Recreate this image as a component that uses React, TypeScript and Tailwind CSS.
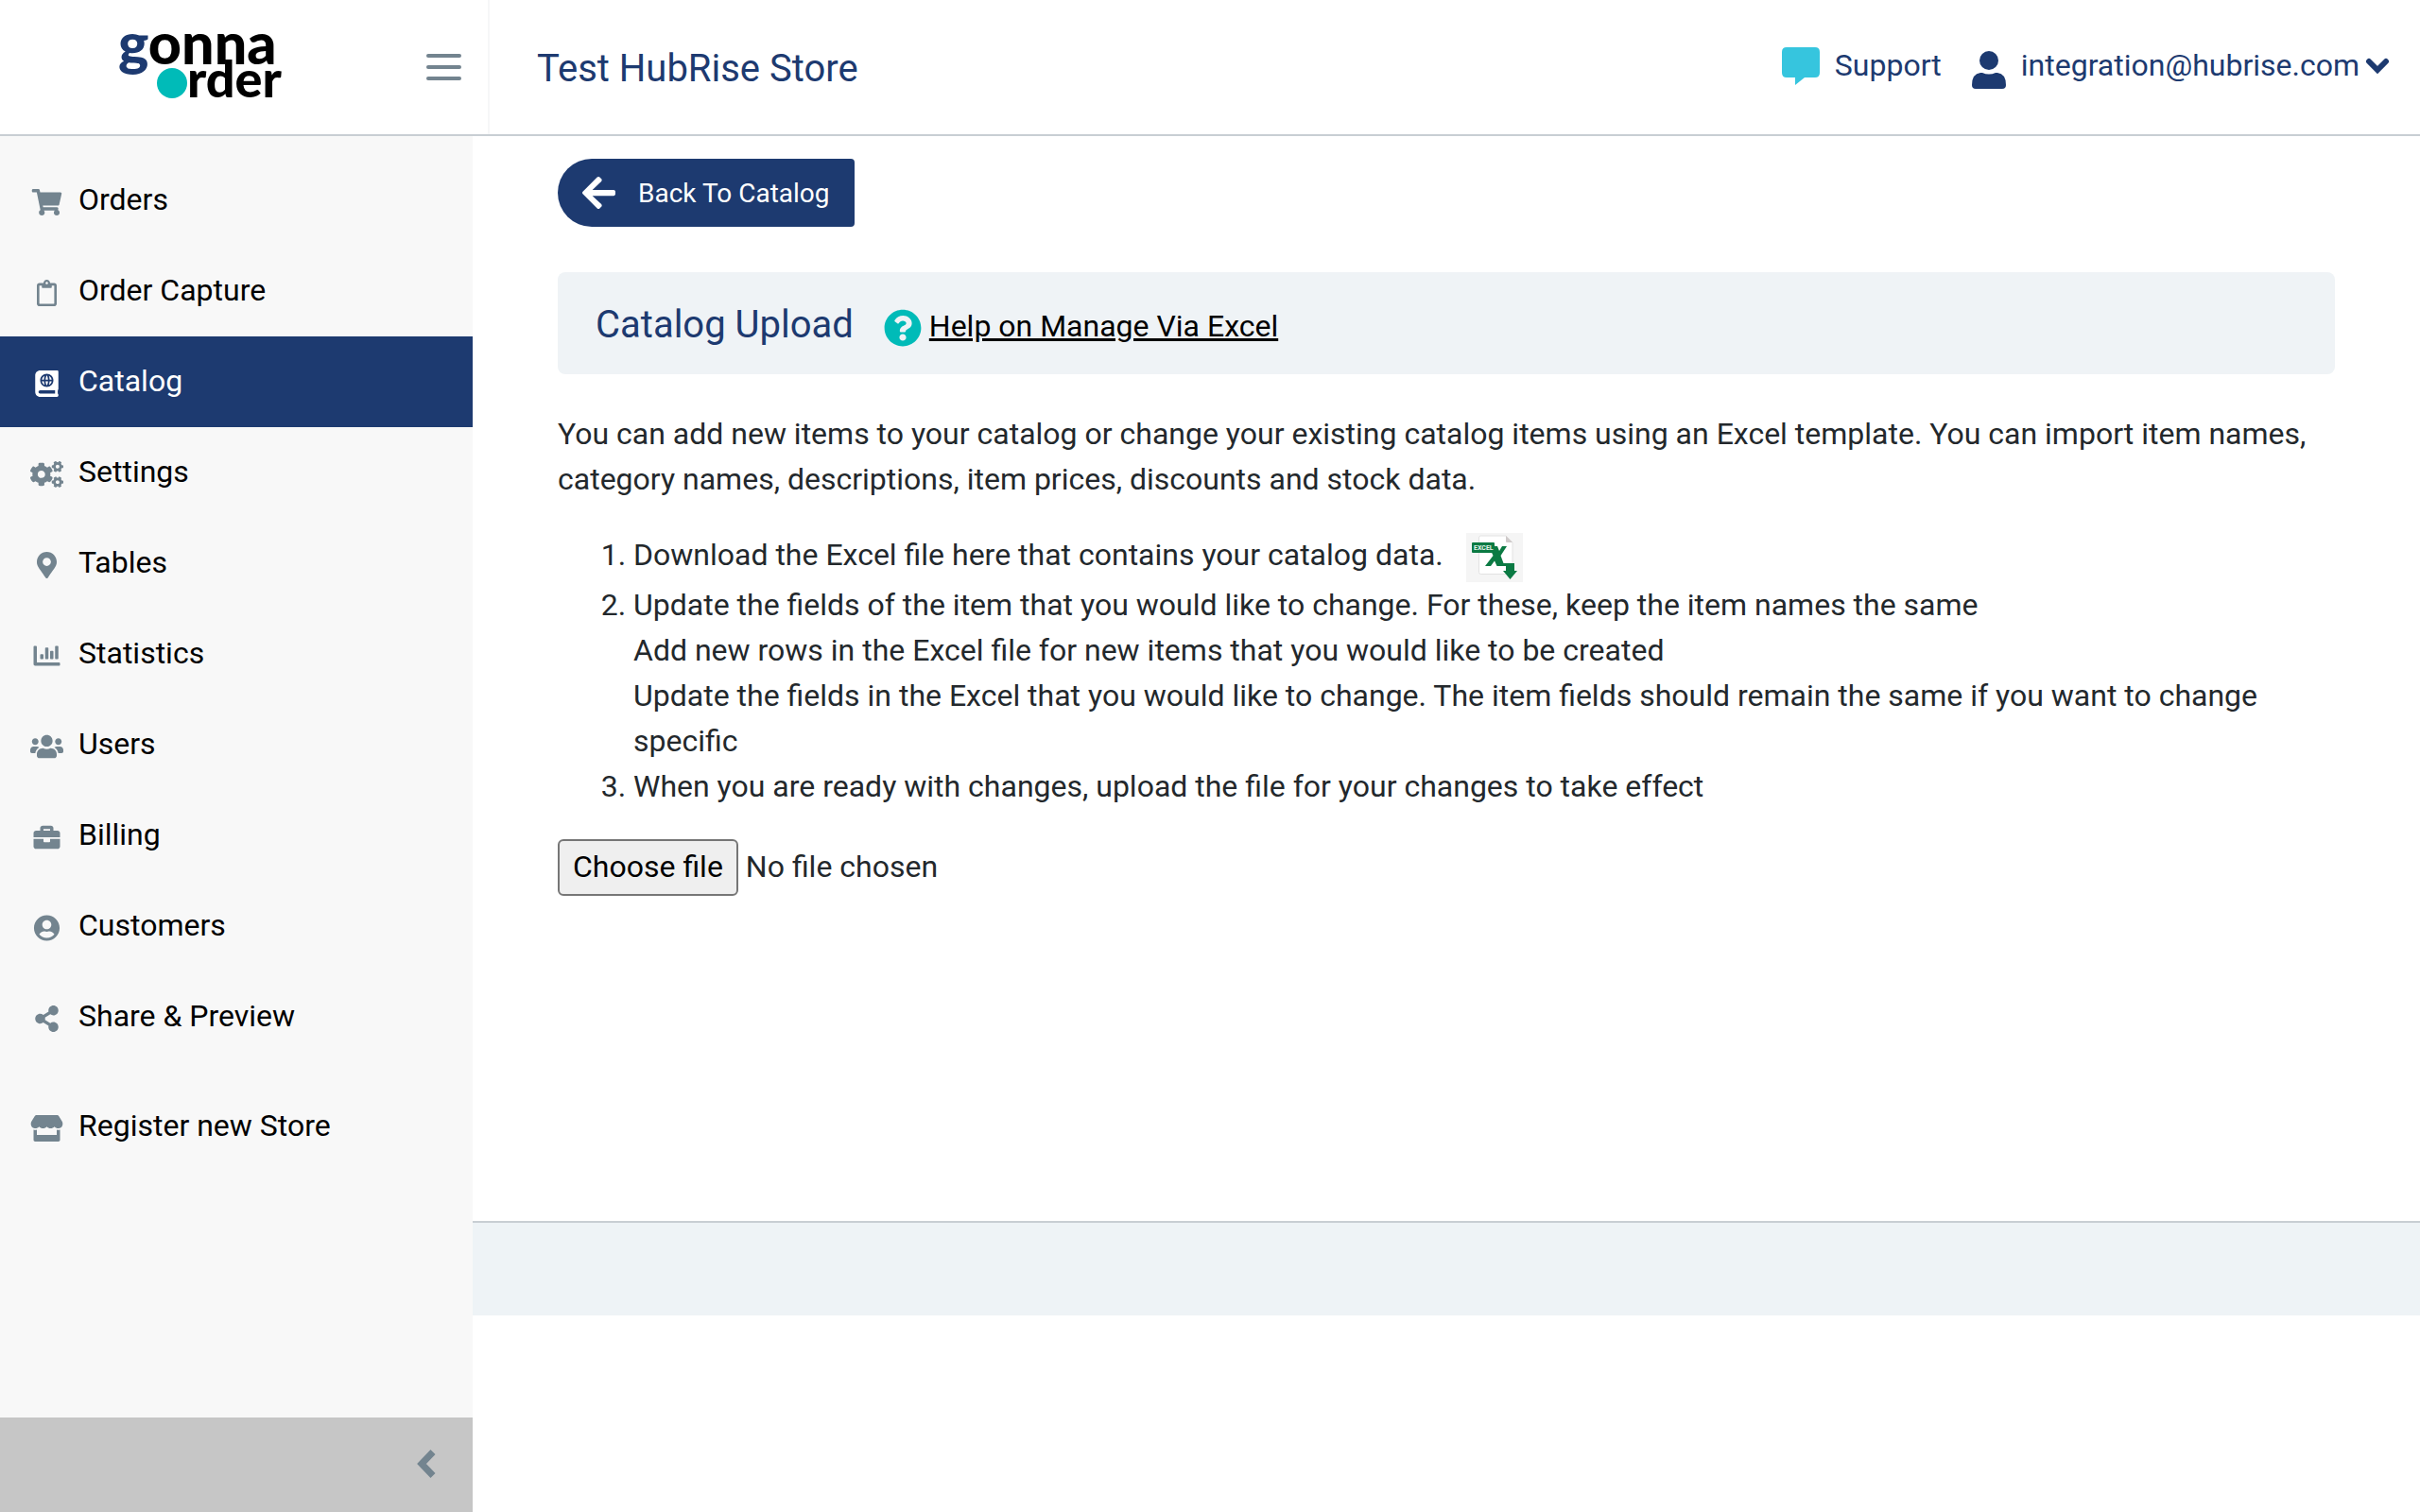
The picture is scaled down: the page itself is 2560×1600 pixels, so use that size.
import { useState } from "react";
import type { ReactNode } from "react";
import type { IconType } from "react-icons";
import {
  FaArrowLeft,
  FaAtlas,
  FaBriefcase,
  FaChartBar,
  FaCogs,
  FaMapMarkerAlt,
  FaQuestionCircle,
  FaRegClipboard,
  FaShareAlt,
  FaShoppingCart,
  FaStore,
  FaUserCircle,
  FaUsers,
} from "react-icons/fa";

type NavEntry = { label: string; icon: IconType; active?: boolean };

const mainNav: NavEntry[] = [
  { label: "Orders", icon: FaShoppingCart },
  { label: "Order Capture", icon: FaRegClipboard },
  { label: "Catalog", icon: FaAtlas, active: true },
  { label: "Settings", icon: FaCogs },
  { label: "Tables", icon: FaMapMarkerAlt },
  { label: "Statistics", icon: FaChartBar },
  { label: "Users", icon: FaUsers },
  { label: "Billing", icon: FaBriefcase },
  { label: "Customers", icon: FaUserCircle },
  { label: "Share & Preview", icon: FaShareAlt },
];

function Logo() {
  return (
    <svg viewBox="-6 -30 188 132" className="h-[132px] w-[188px]" role="img" aria-label="gonna order">
      <g fontFamily="Lato, sans-serif" fontWeight="900" fontSize="61">
        <text x="-1" y="33">
          <tspan fill="#1d3a70">g</tspan>
          <tspan fill="#000000">onna</tspan>
        </text>
        <text x="72" y="68" fontSize="54" fill="#000000">
          rder
        </text>
      </g>
      <circle cx="56" cy="53" r="16" fill="#00bbb8" />
    </svg>
  );
}

function ExcelIcon() {
  return (
    <svg viewBox="0 0 60 52" className="h-[52px] w-[60px]" aria-hidden="true">
      <rect width="60" height="52" fill="#f5f5f5" />
      <path d="M15.500 3H42L49 10V43.500H15.500Q13.500 43.500 13.500 41.500V5Q13.500 3 15.500 3Z" fill="#ffffff" stroke="#e2e2e2" />
      <path d="M42 3L49 10H43Q42 10 42 9Z" fill="#cfcaca" />
      <path
        d="M24 14H33L35 19L38 14H43L36.500 24L39.500 32H51V40H54L46.500 49L39 40H42V35H32.500L30 29.500L26 35H20L28.500 24Z"
        fill="#0b7a43"
      />
      <rect x="6" y="10" width="24" height="11" rx="1" fill="#0b7a43" />
      <text x="8" y="18" fontFamily="Roboto, sans-serif" fontWeight="700" fontSize="7" fill="#e6f3ec">
        EXCEL
      </text>
    </svg>
  );
}

function NavItem({ label, icon: Icon, active }: NavEntry) {
  return (
    <a
      href="#"
      aria-current={active ? "page" : undefined}
      className={
        active
          ? "flex h-24 items-center gap-[9px] bg-[#1d3a70] pl-6 text-white"
          : "flex h-24 items-center gap-[9px] pl-6 text-black"
      }
    >
      <span className={active ? "flex w-[50px] justify-center pt-1" : "flex w-[50px] justify-center pt-1 text-[#73848f]"}>
        <Icon className="h-7 w-[35px]" aria-hidden="true" />
      </span>
      <span className="pb-0.5">{label}</span>
    </a>
  );
}

function Header() {
  return (
    <header className="flex h-36 items-center border-b-2 border-[#c8ced3] bg-white text-[#1d3a70]">
      <div className="flex h-full w-[518px] shrink-0 items-center justify-between border-r-2 border-[#f6f7f8] pr-7 pl-[120px]">
        <a href="#">
          <Logo />
        </a>
        <button type="button" aria-label="Toggle menu" className="flex w-[37px] flex-col gap-2">
          <span className="h-1 rounded-full bg-[#73848f]" />
          <span className="h-1 rounded-full bg-[#73848f]" />
          <span className="h-1 rounded-full bg-[#73848f]" />
        </button>
      </div>
      <h1 className="flex-1 pt-1 pl-[50px] text-[40px] leading-[48px]">Test HubRise Store</h1>
      <div className="flex items-center pr-8 pb-0.5">
        <a href="#" className="flex items-center gap-4">
          <svg viewBox="0 0 40 40" className="size-10" aria-hidden="true">
            <path d="M5 0H35Q40 0 40 5V27Q40 32 35 32H24L14 40V32H5Q0 32 0 27V5Q0 0 5 0Z" fill="#36c5de" />
          </svg>
          <span className="pb-0.5">Support</span>
        </a>
        <button type="button" className="flex items-center pl-8">
          <svg viewBox="0 0 36 40" className="mt-2 mr-4 h-10 w-9" aria-hidden="true">
            <circle cx="18" cy="10" r="10" fill="currentColor" />
            <path d="M9 23H11Q18 26 25 23H27Q36 24 36 36Q36 40 32 40H4Q0 40 0 36Q0 24 9 23Z" fill="currentColor" />
          </svg>
          <span className="pb-0.5">integration@hubrise.com</span>
          <svg viewBox="0 0 26 18" className="ml-1.5 h-[18px] w-[26px]" aria-hidden="true">
            <path d="M4 4L13 13L22 4" fill="none" stroke="currentColor" strokeWidth="6" strokeLinecap="round" />
          </svg>
        </button>
      </div>
    </header>
  );
}

function Sidebar() {
  return (
    <aside className="flex w-[500px] shrink-0 flex-col bg-[#f8f8f8]">
      <nav className="flex-1 py-5">
        {mainNav.map((entry) => (
          <NavItem key={entry.label} {...entry} />
        ))}
        <div className="pt-5">
          <NavItem label="Register new Store" icon={FaStore} />
        </div>
      </nav>
      <button
        type="button"
        aria-label="Collapse sidebar"
        className="flex h-[100px] items-center justify-end bg-[#c6c6c6] pr-[39px] pb-0.5 text-[#73848f]"
      >
        <svg viewBox="0 0 20 30" className="h-[30px] w-5" aria-hidden="true">
          <path d="M17 2.500L5 15L17 27.500" fill="none" stroke="currentColor" strokeWidth="7" />
        </svg>
      </button>
    </aside>
  );
}

function Step({ children }: { children: ReactNode }) {
  return <li>{children}</li>;
}

function CatalogUpload() {
  const [fileName, setFileName] = useState("No file chosen");
  return (
    <main className="min-h-[calc(100vh-452px)] px-[90px] pt-6">
      <a
        href="#"
        className="inline-flex h-[72px] items-center gap-6 rounded-l-[36px] rounded-r-[4px] bg-[#1d3a70] px-[26px] text-[28px] text-white"
      >
        <FaArrowLeft className="h-10 w-[35px]" aria-hidden="true" />
        <span className="pt-0.5">Back To Catalog</span>
      </a>
      <div className="mt-12 flex h-[108px] items-center rounded-lg bg-[#eff3f6] px-10">
        <h2 className="pt-1 text-[40px] leading-[48px] text-[#1d3a70]">Catalog Upload</h2>
        <a href="#" className="flex items-center gap-2 pt-1.5 pl-8 text-black">
          <FaQuestionCircle className="mt-1 size-10 text-[#00bbb8]" aria-hidden="true" />
          <span className="underline">Help on Manage Via Excel</span>
        </a>
      </div>
      <p className="mt-[39px]">
        You can add new items to your catalog or change your existing catalog items using an Excel template. You can
        import item names, category names, descriptions, item prices, discounts and stock data.
      </p>
      <ol className="mt-8 list-decimal pl-20">
        <Step>
          Download the Excel file here that contains your catalog data.
          <a href="#" aria-label="Download Excel file" className="ml-6 inline-block h-[52px] align-middle">
            <ExcelIcon />
          </a>
        </Step>
        <Step>
          Update the fields of the item that you would like to change. For these, keep the item names the same
          <br />
          Add new rows in the Excel file for new items that you would like to be created
          <br />
          Update the fields in the Excel that you would like to change. The item fields should remain the same if you
          want to change specific
        </Step>
        <Step>When you are ready with changes, upload the file for your changes to take effect</Step>
      </ol>
      <div className="mt-8 flex items-center gap-2">
        <input
          id="catalog-file"
          type="file"
          className="sr-only"
          onChange={(event) => setFileName(event.target.files?.[0]?.name ?? "No file chosen")}
        />
        <label
          htmlFor="catalog-file"
          className="flex h-[60px] items-center rounded-md border-2 border-[#767676] bg-[#efefef] px-3.5 pb-0.5 text-black"
        >
          Choose file
        </label>
        <span className="pb-0.5">{fileName}</span>
      </div>
    </main>
  );
}

export default function App() {
  return (
    <div className="flex min-h-screen flex-col bg-white font-['Roboto',sans-serif] text-[32px] leading-[48px] text-[#23282c]">
      <Header />
      <div className="flex flex-1">
        <Sidebar />
        <div className="flex-1">
          <CatalogUpload />
          <footer className="h-[100px] border-t-2 border-[#c8ced3] bg-[#eef3f6]" />
        </div>
      </div>
    </div>
  );
}
